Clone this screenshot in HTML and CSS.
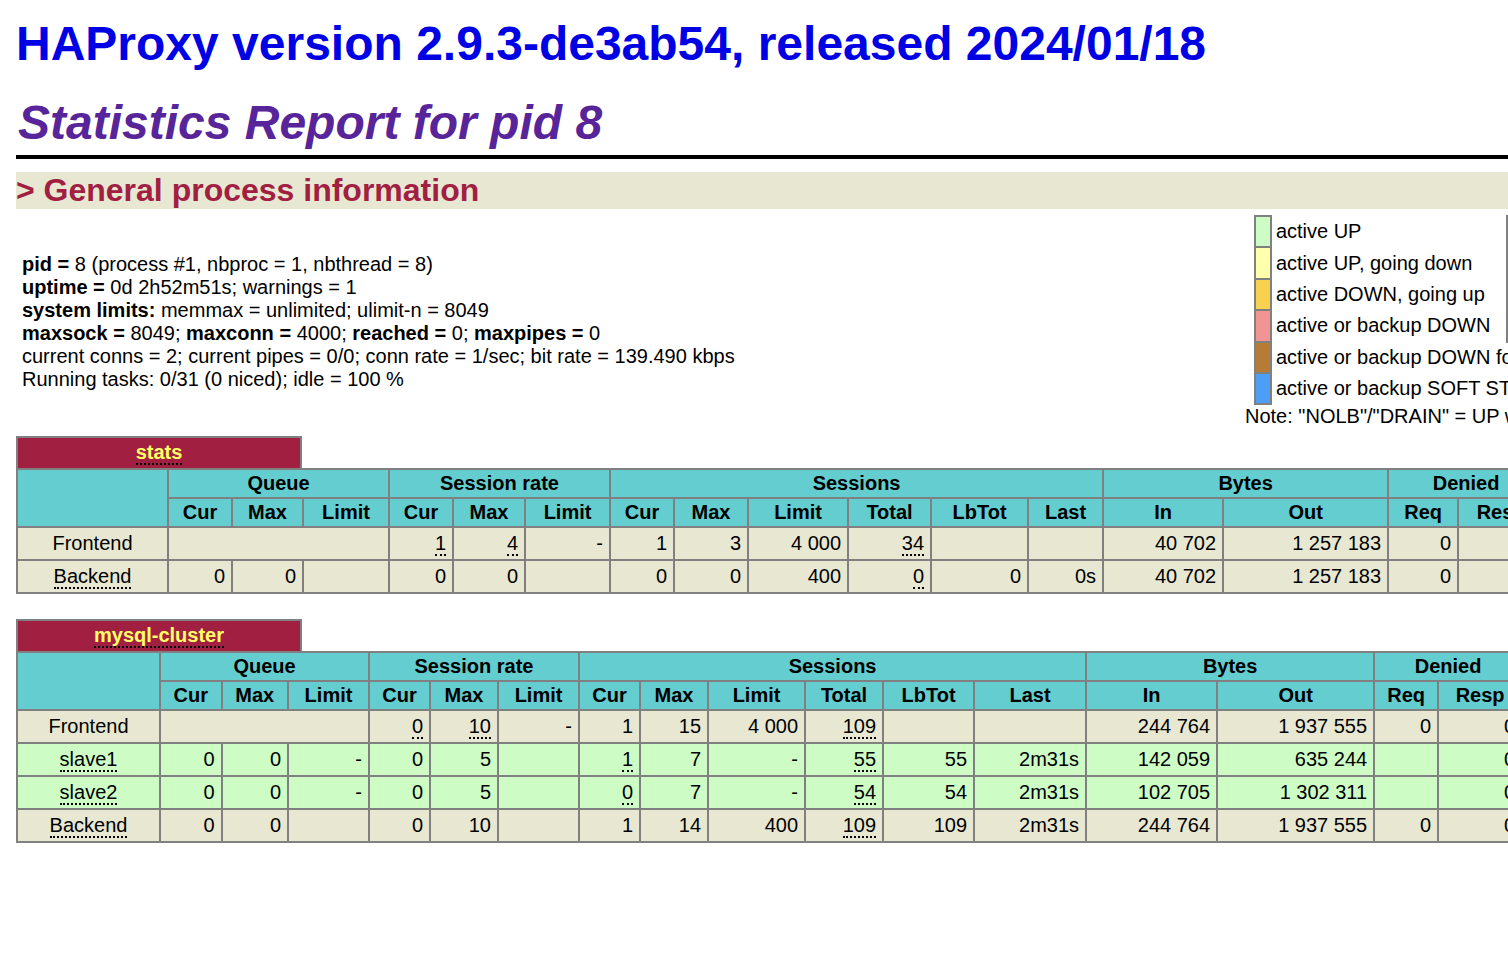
FILE: index.html
```html
<!DOCTYPE html>
<html lang="en">
<head>
<meta charset="utf-8">
<title>Statistics Report for HAProxy</title>
<link rel="stylesheet" href="styles.css">
</head>
<body>
<h1 class="title"><a class="home" href="#">HAProxy version 2.9.3-de3ab54, released 2024/01/18</a></h1>
<h2 class="subtitle">Statistics Report for pid 8</h2>
<div class="hr"></div>
<h3 class="section">&gt; General process information</h3>
<div class="info-row">
  <div class="info">
    <b>pid = </b>8 (process #1, nbproc = 1, nbthread = 8)<br>
    <b>uptime = </b>0d 2h52m51s; warnings = 1<br>
    <b>system limits:</b> memmax = unlimited; ulimit-n = 8049<br>
    <b>maxsock = </b>8049; <b>maxconn = </b>4000; <b>reached = </b>0; <b>maxpipes = </b>0<br>
    current conns = 2; current pipes = 0/0; conn rate = 1/sec; bit rate = 139.490 kbps<br>
    Running tasks: 0/31 (0 niced); idle = 100 %
  </div>
  <div class="legend">
    <table class="lgd">
      <tr><td class="sw active-up">&nbsp;</td><td class="lbl">active UP </td><td class="sw backup-up">&nbsp;</td><td class="lbl">backup UP </td></tr>
      <tr><td class="sw active-going-down">&nbsp;</td><td class="lbl">active UP, going down </td><td class="sw backup-going-down">&nbsp;</td><td class="lbl">backup UP, going down </td></tr>
      <tr><td class="sw active-going-up">&nbsp;</td><td class="lbl">active DOWN, going up </td><td class="sw backup-going-up">&nbsp;</td><td class="lbl">backup DOWN, going up </td></tr>
      <tr><td class="sw active-down">&nbsp;</td><td class="lbl">active or backup DOWN &nbsp;</td><td class="sw no-check">&nbsp;</td><td class="lbl">not checked </td></tr>
      <tr><td class="sw maintain">&nbsp;</td><td class="lbl" colspan="3">active or backup DOWN for maintenance (MAINT) &nbsp;</td></tr>
      <tr><td class="sw draining">&nbsp;</td><td class="lbl" colspan="3">active or backup SOFT STOPPED for maintenance &nbsp;</td></tr>
    </table>
    <div class="note">Note: "NOLB"/"DRAIN" = UP with load-balancing disabled.</div>
  </div>
</div>

<div class="proxy">
  <div class="pxname"><a class="px" href="#stats"><u>stats</u></a></div>
  <table class="tbl tbl-stats">
    <colgroup><col><col><col><col><col><col><col><col><col><col><col><col><col><col><col><col><col></colgroup>
    <tr class="titre"><th rowspan="2"></th><th colspan="3">Queue</th><th colspan="3">Session rate</th><th colspan="6">Sessions</th><th colspan="2">Bytes</th><th colspan="2">Denied</th></tr>
    <tr class="titre"><th>Cur</th><th>Max</th><th>Limit</th><th>Cur</th><th>Max</th><th>Limit</th><th>Cur</th><th>Max</th><th>Limit</th><th>Total</th><th>LbTot</th><th>Last</th><th>In</th><th>Out</th><th>Req</th><th>Resp</th></tr>
    <tr class="frontend"><td class="ac">Frontend</td><td colspan="3"></td><td><u>1</u></td><td><u>4</u></td><td>-</td><td>1</td><td>3</td><td>4 000</td><td><u>34</u></td><td></td><td></td><td>40 702</td><td>1 257 183</td><td>0</td><td>0</td></tr>
    <tr class="backend"><td class="ac"><u>Backend</u></td><td>0</td><td>0</td><td></td><td>0</td><td>0</td><td></td><td>0</td><td>0</td><td>400</td><td><u>0</u></td><td>0</td><td>0s</td><td>40 702</td><td>1 257 183</td><td>0</td><td>0</td></tr>
  </table>
</div>

<div class="proxy">
  <div class="pxname"><a class="px" href="#mysql-cluster"><u>mysql-cluster</u></a></div>
  <table class="tbl tbl-mysql">
    <colgroup><col><col><col><col><col><col><col><col><col><col><col><col><col><col><col><col><col></colgroup>
    <tr class="titre"><th rowspan="2"></th><th colspan="3">Queue</th><th colspan="3">Session rate</th><th colspan="6">Sessions</th><th colspan="2">Bytes</th><th colspan="2">Denied</th></tr>
    <tr class="titre"><th>Cur</th><th>Max</th><th>Limit</th><th>Cur</th><th>Max</th><th>Limit</th><th>Cur</th><th>Max</th><th>Limit</th><th>Total</th><th>LbTot</th><th>Last</th><th>In</th><th>Out</th><th>Req</th><th>Resp</th></tr>
    <tr class="frontend"><td class="ac">Frontend</td><td colspan="3"></td><td><u>0</u></td><td><u>10</u></td><td>-</td><td>1</td><td>15</td><td>4 000</td><td><u>109</u></td><td></td><td></td><td>244 764</td><td>1 937 555</td><td>0</td><td>0</td></tr>
    <tr class="active-up"><td class="ac"><u>slave1</u></td><td>0</td><td>0</td><td>-</td><td>0</td><td>5</td><td></td><td><u>1</u></td><td>7</td><td>-</td><td><u>55</u></td><td>55</td><td>2m31s</td><td>142 059</td><td>635 244</td><td></td><td>0</td></tr>
    <tr class="active-up"><td class="ac"><u>slave2</u></td><td>0</td><td>0</td><td>-</td><td>0</td><td>5</td><td></td><td><u>0</u></td><td>7</td><td>-</td><td><u>54</u></td><td>54</td><td>2m31s</td><td>102 705</td><td>1 302 311</td><td></td><td>0</td></tr>
    <tr class="backend"><td class="ac"><u>Backend</u></td><td>0</td><td>0</td><td></td><td>0</td><td>10</td><td></td><td>1</td><td>14</td><td>400</td><td><u>109</u></td><td>109</td><td>2m31s</td><td>244 764</td><td>1 937 555</td><td>0</td><td>0</td></tr>
  </table>
</div>
</body>
</html>
```

FILE: styles.css
```css
html {
  overflow: hidden;
}

body {
  margin: 16px;
  width: 2860px;
  font-family: "Liberation Sans", Arial, Helvetica, sans-serif;
  font-size: 24px;
  color: #000;
  background: #fff;
}

.title {
  margin: 0 0 24px 0;
  font-size: 48px;
  font-weight: bold;
  line-height: normal;
}

.home {
  color: #0000e4;
  text-decoration: none;
}

.subtitle {
  margin: 0;
  padding-left: 2px;
  font-size: 48px;
  font-weight: bold;
  font-style: italic;
  color: #58249a;
  line-height: normal;
}

.hr {
  margin-top: 5px;
  border-bottom: 4px solid #000;
}

.section {
  margin: 13px 0 0 0;
  font-size: 32px;
  font-weight: bold;
  color: #a12042;
  background: #e8e8d2;
  line-height: normal;
}

/* general info */
.info-row {
  display: flex;
  align-items: center;
  padding: 6px 0 8px 0;
  font-size: 20px;
  line-height: 23px;
}

.info {
  width: 1229px;
  box-sizing: border-box;
  padding-left: 6px;
  white-space: nowrap;
}

.legend {
  display: flex;
  flex-direction: column;
  align-items: center;
  white-space: nowrap;
}

.lgd {
  border-collapse: collapse;
  font-size: 20px;
  line-height: 23px;
}

.lgd td {
  border: 2px solid #808080;
  padding: 3.2px 4px;
}

.lgd td.lbl {
  border: none;
  text-align: left;
  white-space: nowrap;
}

.active-up { background: #cdfdc5; }
.active-going-down { background: #ffffac; }
.active-going-up { background: #f8d24e; }
.active-down { background: #f09593; }
.maintain { background: #b67b35; }
.draining { background: #4d9ef7; }
.backup-up { background: #b6cffb; }
.backup-going-down { background: #b465f7; }
.backup-going-up { background: #ef87f9; }
.no-check { background: #e0e0e0; }

/* proxies */
.proxy {
  margin-bottom: 25px;
}

.pxname {
  width: 286px;
  box-sizing: border-box;
  border: 2px solid #808080;
  border-bottom: none;
  background: #a12042;
  padding: 3px 6px 4px 6px;
  text-align: center;
  font-size: 20px;
  line-height: 23px;
  font-weight: bold;
  white-space: nowrap;
}

.px {
  color: #ffff67;
  text-decoration: none;
}

u {
  text-decoration: none;
  border-bottom: 2px dotted #000;
}

.tbl {
  border-collapse: collapse;
  table-layout: fixed;
  font-size: 20px;
  line-height: 23px;
}

.tbl th {
  border: 2px solid #808080;
  padding: 2px;
  background: #63cdcf;
  font-weight: bold;
  text-align: center;
  white-space: nowrap;
}

.tbl td {
  border: 2px solid #808080;
  padding: 4px 6px;
  text-align: right;
  white-space: nowrap;
}

.tbl td.ac {
  text-align: center;
}

.frontend,
.backend {
  background: #e8e8d2;
}

.tbl-stats { width: 1527px; }
.tbl-stats col:nth-child(1) { width: 151px; }
.tbl-stats col:nth-child(2) { width: 64px; }
.tbl-stats col:nth-child(3) { width: 71px; }
.tbl-stats col:nth-child(4) { width: 86px; }
.tbl-stats col:nth-child(5) { width: 64px; }
.tbl-stats col:nth-child(6) { width: 72px; }
.tbl-stats col:nth-child(7) { width: 85px; }
.tbl-stats col:nth-child(8) { width: 64px; }
.tbl-stats col:nth-child(9) { width: 74px; }
.tbl-stats col:nth-child(10) { width: 100px; }
.tbl-stats col:nth-child(11) { width: 83px; }
.tbl-stats col:nth-child(12) { width: 97px; }
.tbl-stats col:nth-child(13) { width: 75px; }
.tbl-stats col:nth-child(14) { width: 120px; }
.tbl-stats col:nth-child(15) { width: 165px; }
.tbl-stats col:nth-child(16) { width: 70px; }
.tbl-stats col:nth-child(17) { width: 86px; }

.tbl-mysql { width: 1505px; }
.tbl-mysql col:nth-child(1) { width: 143px; }
.tbl-mysql col:nth-child(2) { width: 61.5px; }
.tbl-mysql col:nth-child(3) { width: 66.5px; }
.tbl-mysql col:nth-child(4) { width: 81px; }
.tbl-mysql col:nth-child(5) { width: 61px; }
.tbl-mysql col:nth-child(6) { width: 68px; }
.tbl-mysql col:nth-child(7) { width: 81px; }
.tbl-mysql col:nth-child(8) { width: 61px; }
.tbl-mysql col:nth-child(9) { width: 68px; }
.tbl-mysql col:nth-child(10) { width: 97px; }
.tbl-mysql col:nth-child(11) { width: 78px; }
.tbl-mysql col:nth-child(12) { width: 91px; }
.tbl-mysql col:nth-child(13) { width: 112px; }
.tbl-mysql col:nth-child(14) { width: 131px; }
.tbl-mysql col:nth-child(15) { width: 157px; }
.tbl-mysql col:nth-child(16) { width: 64px; }
.tbl-mysql col:nth-child(17) { width: 84px; }
```
